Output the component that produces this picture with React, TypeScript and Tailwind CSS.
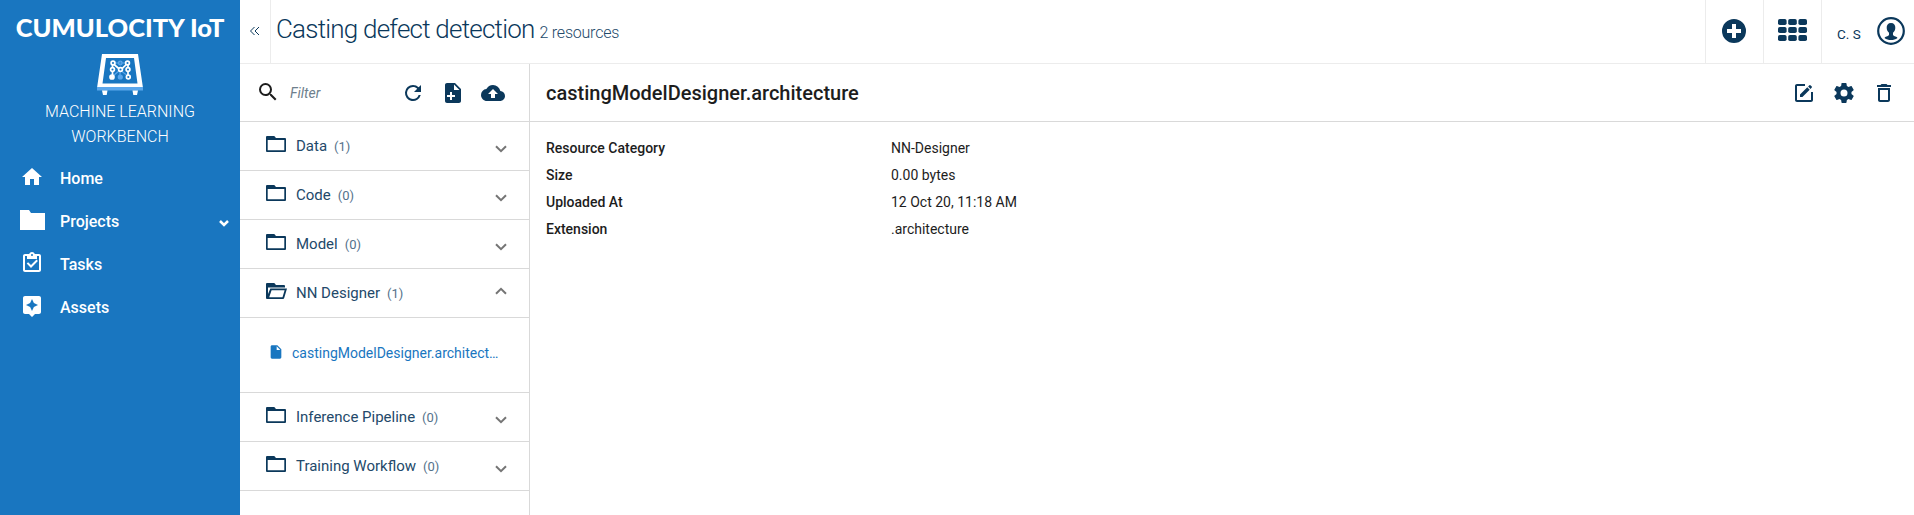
import React from "react";

type IconProps = { d: string; className?: string; box?: string };

const Icon = ({ d, className = "size-6", box = "0 0 24 24" }: IconProps) => (
  <svg viewBox={box} className={`block shrink-0 fill-current ${className}`}>
    <path d={d} fillRule="evenodd" />
  </svg>
);

const SEARCH = "M15.5 14h-.79l-.28-.27A6.471 6.471 0 0 0 16 9.5 6.5 6.5 0 1 0 9.5 16c1.61 0 3.09-.59 4.23-1.57l.27.28v.79l5 4.99L20.49 19l-4.99-5zm-6 0C7.01 14 5 11.99 5 9.5S7.01 5 9.5 5 14 7.01 14 9.5 11.99 14 9.5 14z";
const REFRESH = "M17.65 6.35A7.958 7.958 0 0 0 12 4a8 8 0 1 0 7.73 10h-2.08A5.99 5.99 0 0 1 12 18a6 6 0 1 1 0-12c1.66 0 3.14.69 4.22 1.78L13 11h7V4l-2.35 2.35z";
const NOTE_ADD = "M14 2H6c-1.1 0-2 .9-2 2v16c0 1.1.9 2 2 2h12c1.1 0 2-.9 2-2V8l-6-6zM14 16h-3v3H9v-3H6v-2h3v-3h2v3h3v2zM13 9V3.5L18.5 9H13z";
const CLOUD = "M19.35 10.04A7.49 7.49 0 0 0 12 4C9.11 4 6.6 5.64 5.35 8.04A5.994 5.994 0 0 0 0 14c0 3.31 2.69 6 6 6h13c2.76 0 5-2.24 5-5 0-2.64-2.05-4.78-4.65-4.96zM14 13v4h-4v-4H7l5-5 5 5h-3z";
const FOLDER = "M0 1q0-1 1-1h7q1 0 1.500 1.500L10 2h9q1 0 1 1v12q0 1-1 1H1q-1 0-1-1zM1.700 4v10.200h16.600V4z";
const FOLDER_OPENED = "M0 1q0-1 1-1h7q1 0 1.500 1.500L10 2h8q1 0 1 1v1.500H2V11L4.300 5.500H21L18.200 15q-.3 1-1.200 1H1q-1 0-1-1zM5.600 7.300L3.200 14.200h13.300l2.100-6.900z";
const FILE = "M6 2c-1.100 0-2 .9-2 2v16c0 1.100.9 2 2 2h12c1.100 0 2-.9 2-2V8l-6-6H6zm7 7V3.500L18.500 9H13z";
const HOME = "M10 20v-6h4v6h5v-8h3L12 3 2 12h3v8z";
const TASKS = "M19 3h-4.180C14.400 1.840 13.300 1 12 1s-2.400.84-2.820 2H5c-1.100 0-2 .9-2 2v14c0 1.100.9 2 2 2h14c1.100 0 2-.9 2-2V5c0-1.100-.9-2-2-2zm-7 0a1 1 0 1 1 0 2 1 1 0 0 1 0-2zm7 16H5V5h2v3h10V5h2zM6.700 12.600l1.400-1.400 2.900 2.900 5.500-5.500L17.900 10 11 16.900z";
const ASSETS = "M19 2H5c-1.100 0-2 .9-2 2v14c0 1.100.9 2 2 2h4l3 3 3-3h4c1.100 0 2-.9 2-2V4c0-1.100-.9-2-2-2zm-5.120 10.880L12 17l-1.880-4.120L6 11l4.120-1.880L12 5l1.880 4.120L18 11z";
const EDIT = "M5 3h8v2H5v14h14v-8h2v8c0 1.100-.9 2-2 2H5c-1.100 0-2-.9-2-2V5c0-1.100.9-2 2-2zM8 13.600l7.300-7.300 2.400 2.400-7.300 7.300H8zM16.100 5.500l1.300-1.300q.5-.4 1 0l1.400 1.400q.4.500 0 1l-1.300 1.300z";
const GEAR = "M19.430 12.980c.04-.32.07-.64.07-.98s-.03-.66-.07-.98l2.110-1.650c.19-.15.24-.42.12-.64l-2-3.460c-.12-.22-.39-.3-.61-.22l-2.490 1c-.52-.4-1.080-.73-1.690-.98l-.38-2.650A.488.488 0 0 0 14 2h-4c-.25 0-.46.18-.49.42l-.38 2.650c-.61.25-1.170.59-1.690.98l-2.490-1c-.23-.09-.49 0-.61.22l-2 3.460c-.13.22-.07.49.12.64l2.110 1.650c-.04.32-.07.65-.07.98s.03.66.07.98l-2.110 1.650c-.19.15-.24.42-.12.64l2 3.460c.12.22.39.3.61.22l2.490-1c.52.4 1.080.73 1.690.98l.38 2.650c.03.24.24.42.49.42h4c.25 0 .46-.18.49-.42l.38-2.650c.61-.25 1.170-.59 1.690-.98l2.490 1c.23.09.49 0 .61-.22l2-3.460c.12-.22.07-.49-.12-.64zM12 15.500a3.500 3.500 0 1 1 0-7 3.500 3.500 0 0 1 0 7z";
const TRASH = "M6 19c0 1.100.9 2 2 2h8c1.100 0 2-.9 2-2V7H6v12zM8 9h8v10H8zM15.500 4l-1-1h-5l-1 1H5v2h14V4z";

const Logo = () => (
  <svg viewBox="0 0 48 44" className="block h-11 w-12">
    <path d="M6 2h36l5 34H1zM10 6L6.500 31.500h35L38 6z" fill="#fff" fillRule="evenodd" />
    <path d="M1 35h46v3.500H1z" fill="#5ba7ec" />
    <path d="M6 38.500h5.500l-.8 4.500H7zM36.500 38.500H42L41 43h-3.700z" fill="#fff" />
    <g stroke="#5ba7ec" strokeWidth="1.200" fill="none">
      <path d="M17 11h15M17 24l7-6 8 6M24 18v7" />
      <circle cx="24.300" cy="11" r="1.800" />
      <circle cx="24.300" cy="25" r="2" fill="#5ba7ec" />
    </g>
    <g stroke="#fff" strokeWidth="1.700" fill="#1976c0">
      <path d="M16.500 25V11l8 7 7.500-7v14" fill="none" />
      <circle cx="17" cy="11" r="1.900" />
      <circle cx="31.500" cy="11" r="1.900" />
      <circle cx="16.500" cy="17.500" r="1.900" />
      <circle cx="24.500" cy="17.500" r="1.900" />
      <circle cx="32" cy="17.500" r="1.900" />
      <circle cx="32.300" cy="25" r="1.900" />
      <circle cx="16" cy="25" r="2" fill="#fff" />
    </g>
  </svg>
);

const NAV = [
  { label: "Home", d: HOME, icon: "size-6", expandable: false },
  { label: "Projects", d: "M0 0h9l2 3h14v17H0z", icon: "h-5 w-[25px]", expandable: true },
  { label: "Tasks", d: TASKS, icon: "size-6", expandable: false },
  { label: "Assets", d: ASSETS, icon: "size-6", expandable: false },
];

const Sidebar = () => (
  <aside className="flex w-60 shrink-0 flex-col bg-[#1976c0] text-white">
    <div className="flex h-[156px] flex-col items-center">
      <div className="mt-[11px] h-8 font-['Lato'] text-[25.500px] leading-8 font-black whitespace-nowrap">CUMULOCITY IoT</div>
      <div className="mt-[9px]"><Logo /></div>
      <div className="mt-[3px] text-center text-[16px] leading-[25px] font-light">
        MACHINE LEARNING
        <br />
        WORKBENCH
      </div>
    </div>
    <nav className="flex flex-col">
      {NAV.map((n) => (
        <a key={n.label} className="flex h-[43px] items-center pr-[9px] pl-5">
          <span className="flex w-6 justify-center">
            <Icon d={n.d} box={n.expandable ? "0 0 25 20" : "0 0 24 24"} className={`${n.icon} mb-px`} />
          </span>
          <span className="ml-4 flex-1 pt-[3px] text-[16px] font-medium">{n.label}</span>
          {n.expandable && (
            <svg viewBox="0 0 14 14" className="mt-1 size-3.5 fill-none stroke-white stroke-[2.500]">
              <path d="M3 5l4 4 4-4" />
            </svg>
          )}
        </a>
      ))}
    </nav>
  </aside>
);

const TopBar = () => (
  <header className="flex h-16 shrink-0 border-b border-[#ececec]">
    <button className="flex w-[31px] items-center justify-center border-r border-[#ececec] pb-0.5">
      <svg viewBox="0 0 10 10" className="size-2.5 fill-none stroke-[#0b385b]">
        <path d="M4.500 1l-4 4 4 4M9 1L5 5l4 4" />
      </svg>
    </button>
    <h1 className="flex flex-1 items-baseline pt-3 pl-[5px] text-[26px] leading-[34px] font-light tracking-[-0.78px]">
      Casting defect detection
      <small className="ml-[5px] text-base font-light tracking-[-0.22px] text-[#23496a]">2 resources</small>
    </h1>
    <div className="flex w-[58px] items-center justify-center border-l border-[#ececec] pr-px pb-0.5">
      <Icon d="M12 0a12 12 0 1 0 0 24 12 12 0 0 0 0-24zM10 5h4v5h5v4h-5v5h-4v-5H5v-4h5z" className="size-6" />
    </div>
    <div className="flex w-[58px] items-center justify-center border-l border-[#ececec] pb-[3px]">
      <svg viewBox="0 0 29 22" className="h-[22px] w-[29px] fill-current">
        {[0, 8, 16].map((y) =>
          [0, 10.2, 20.4].map((x) => <rect key={`${x}-${y}`} x={x} y={y} width="8.600" height="6" rx="1.800" />),
        )}
      </svg>
    </div>
    <div className="flex w-[93px] items-center border-l border-[#ececec] pb-0.5 pl-[15px]">
      <span className="w-10 pt-2 text-[13.500px]">C. S</span>
      <svg viewBox="0 0 28 28" className="size-7 fill-current">
        <circle cx="14" cy="14" r="12.800" fill="none" stroke="currentColor" strokeWidth="2.200" />
        <path d="M14 6c-3 0-4.500 2-4.300 5 .1 2 .9 3.700 2.300 4.800V18c-1 1.500-4 1.500-4.500 3 2 1.500 4 2 6.500 2s4.500-.5 6.500-2c-.5-1.500-3.500-1.500-4.500-3v-2.200c1.400-1.100 2.200-2.800 2.300-4.800.2-3-1.300-5-4.300-5z" />
      </svg>
    </div>
  </header>
);

const GROUPS = [
  { name: "Data", count: 1 },
  { name: "Code", count: 0 },
  { name: "Model", count: 0 },
  { name: "NN Designer", count: 1, file: "castingModelDesigner.architect…" },
  { name: "Inference Pipeline", count: 0 },
  { name: "Training Workflow", count: 0 },
];

const ResourceList = () => (
  <section className="flex w-[290px] shrink-0 flex-col border-r border-[#d9d9d9]">
    <div className="flex h-[58px] shrink-0 items-center border-b border-[#d9d9d9] pl-4">
      <Icon d={SEARCH} className="mb-0.5 size-6 text-[#1d1d1d]" />
      <span className="ml-2.5 w-[111px] text-sm text-[#6e7f8d] italic">Filter</span>
      <div className="flex gap-4">
        <Icon d={REFRESH} />
        <Icon d={NOTE_ADD} />
        <Icon d={CLOUD} />
      </div>
    </div>
    {GROUPS.map((g) => (
      <div key={g.name}>
        <div className="flex h-[49px] items-center border-b border-[#d9d9d9] pr-[22px] pl-[26px]">
          <Icon d={g.file ? FOLDER_OPENED : FOLDER} box="0 0 21 16" className="mb-1 h-4 w-[21px]" />
          <span className="ml-[9px] text-[15px] text-[#23496a]">{g.name}</span>
          <span className="ml-[7px] flex-1 pt-0.5 text-[13px] text-[#54728b]">({g.count})</span>
          <svg
            viewBox="0 0 12 8"
            className={`h-2 w-3 fill-none stroke-[#757575] stroke-2 ${g.file ? "mb-[5px] rotate-180" : "mt-[6px]"}`}
          >
            <path d="M1 1.200l5 5 5-5" />
          </svg>
        </div>
        {g.file && (
          <div className="flex h-[75px] items-center border-b border-[#d9d9d9] pb-1 pl-7 text-[#1976c0]">
            <Icon d={FILE} className="mb-0.5 size-4" />
            <span className="ml-2 text-sm whitespace-nowrap">{g.file}</span>
          </div>
        )}
      </div>
    ))}
  </section>
);

const FIELDS = [
  ["Resource Category", "NN-Designer"],
  ["Size", "0.00 bytes"],
  ["Uploaded At", "12 Oct 20, 11:18 AM"],
  ["Extension", ".architecture"],
];

const Details = () => (
  <section className="flex flex-1 flex-col text-[#1d1d1d]">
    <div className="flex h-[58px] items-center justify-between border-b border-[#d9d9d9] pr-[18px] pl-4">
      <h2 className="text-[20px] font-medium">castingModelDesigner.architecture</h2>
      <div className="flex gap-4 text-[#0b385b]">
        <Icon d={EDIT} />
        <Icon d={GEAR} />
        <Icon d={TRASH} />
      </div>
    </div>
    <dl className="mt-3 ml-4">
      {FIELDS.map(([k, v]) => (
        <div key={k} className="flex h-[27px] items-center pt-px text-[14px]">
          <dt className="w-[345px] font-medium">{k}</dt>
          <dd>{v}</dd>
        </div>
      ))}
    </dl>
  </section>
);

export default function App() {
  return (
    <div className="flex h-[515px] w-full overflow-hidden bg-white font-['Roboto',sans-serif] text-[#0b385b]">
      <Sidebar />
      <main className="flex min-w-0 flex-1 flex-col">
        <TopBar />
        <div className="flex min-h-0 flex-1">
          <ResourceList />
          <Details />
        </div>
      </main>
    </div>
  );
}
